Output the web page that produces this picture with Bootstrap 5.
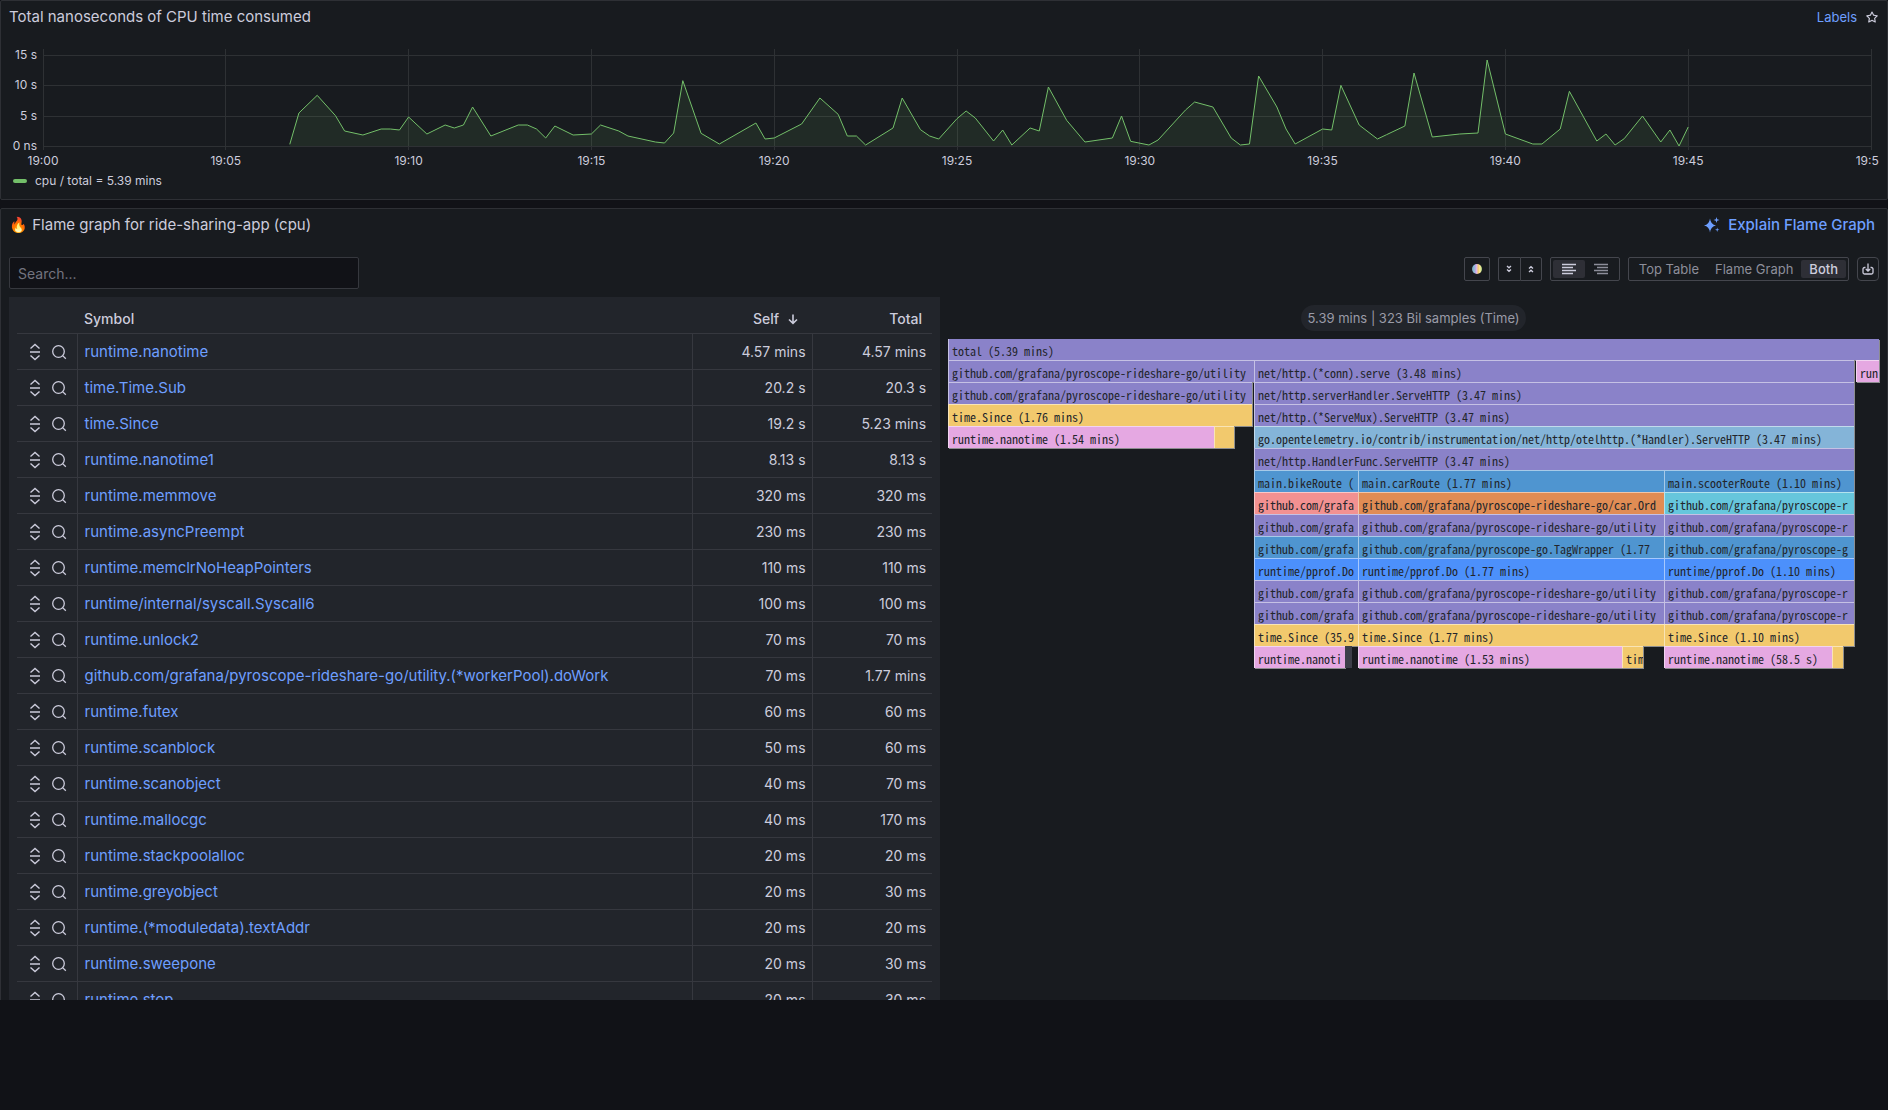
<!DOCTYPE html>
<html lang="en" data-bs-theme="dark">
<head>
<meta charset="utf-8">
<meta name="viewport" content="width=device-width, initial-scale=1">
<title>ride-sharing-app (cpu)</title>
<link href="https://cdn.jsdelivr.net/npm/bootstrap@5.3.0/dist/css/bootstrap.min.css" rel="stylesheet">
<style>
:root{--fg:#ccccdc;--fg-dim:#8d8e9a;--link:#6e9fff;--panel:#181b1f;--raised:#22252b;--line:#2e3035;--line-strong:#44464d}
body{background:#111217;color:var(--fg);font-family:Inter,"Liberation Sans",sans-serif;font-size:14px;line-height:22px}
.viewport-clip{height:calc(100vh - 110px);overflow:hidden}
.panel{background:var(--panel);border:1px solid var(--line);border-radius:2px}
.panel-head{padding:5px 8px 0}
.panel-title{font-size:15px;font-weight:400;line-height:22px;margin:0}
h2.panel-title{color:var(--fg)}
a{color:var(--link);text-decoration:none}
svg{display:block;flex:none}
.small-text{font-size:12px;line-height:16px}
.mid-text{font-size:13px;line-height:16px}
/* time series */
.chart-wrap{overflow:hidden;padding-right:8px;margin-top:19px}
.chart-body{padding-top:2px}
.y-axis{width:34px;padding-right:6px;margin:-2px 0 -4px}
.y-axis span{line-height:16px}
.plot{height:101px}
.x-axis{margin-left:34px;height:16px;margin-top:3px}
.x-axis span{width:0;display:flex;justify-content:center;white-space:nowrap}
.grid-line{stroke:#2e3134;stroke-width:1;vector-effect:non-scaling-stroke;shape-rendering:crispEdges;fill:none}
.series-line{stroke:#73bf69;stroke-width:1;fill:none;vector-effect:non-scaling-stroke}
.series-fill{fill:#73bf69;fill-opacity:.1}
.legend-line{padding:4px 0 10px 12px}
.swatch{width:14px;height:4px;border-radius:2px;background:#73bf69}
/* toolbar */
.tool-line{margin:21px 0 8px}
.search-box{width:350px;height:32px;background:#111217;border:1px solid #36383e;border-radius:2px;padding:0 8px;font-size:14px;color:var(--fg)}
.search-box::placeholder{color:#73747f;opacity:1}
.tool{height:24px;border:1px solid var(--line-strong);background:transparent;color:var(--fg);border-radius:2px;padding:0;display:flex;align-items:center;justify-content:center}
.tool-palette{width:26px}
.tool-half{width:22px}
.tool-half:first-child{border-radius:2px 0 0 2px;border-right:0}
.tool-half:last-child{border-radius:0 2px 2px 0}
.segmented{height:24px;border:1px solid var(--line-strong);border-radius:2px;padding:2px}
.segmented button{border:0;background:transparent;color:var(--fg-dim);font-size:13px;line-height:18px;padding:0 8px;border-radius:2px;height:18px}
.segmented button.active{background:#2e2f36;color:var(--fg);font-weight:500}
.dot-palette{width:10px;height:10px;border-radius:50%;background:linear-gradient(90deg,#7f9fc0 0,#8ac0d0 20%,#b7a9e8 35%,#e7b9e0 48%,#f2c96d 62%,#ffee9e 80%,#9fcf79 100%)}
/* symbol table */
.table-pane{width:50%;min-width:0;background:var(--raised);padding:0 8px}
.sym{width:100%;table-layout:fixed;border-collapse:collapse}
.sym tr{height:36px}
.sym th{font-weight:500;padding:0 10px 3px 7px;white-space:nowrap;vertical-align:bottom}
.sym th.sorted{padding-right:13px}
.sym td{padding:1px 6px 0 7px;white-space:nowrap;border-top:1px solid #36383f}
.sym td+td{border-left:1px solid #36383f}
.sym td a{font-size:15px}
.sym .c-act{width:60px}
.sym .c-num{width:120px}
.act-cell{padding-left:5px;gap:10px}
.icon-btn{background:none;border:0;padding:0;color:var(--fg);display:block}
/* flame graph */
.flame-pane{width:50%;min-width:0}
.pill{background:var(--raised);border-radius:13px;height:26px;line-height:26px;padding:0 6px;font-size:13px;color:#9a9ba7}
.frow{display:flex;height:22px}
.bar{height:22px;overflow:hidden;white-space:nowrap;color:#22252b;font:12px/22px "Noto Sans Mono CJK JP","Noto Sans Mono CJK SC",monospace;padding:1px 0 0 3px;border-top:1px solid rgba(255,255,255,.5);border-left:1px solid rgba(255,255,255,.5);box-shadow:1px 1px 0 rgba(255,255,255,.5);min-width:0;flex:none}
.frow:first-child .bar{border-top:0;height:21px}
.frow:first-child{height:21px}
.bar.blank{padding:0}
.bar.dim{border:0;box-shadow:none;padding:0}
</style>
</head>
<body>
<main class="viewport-clip">
<section class="panel">
  <header class="panel-head d-flex justify-content-between align-items-center">
    <h2 class="panel-title">Total nanoseconds of CPU time consumed</h2>
    <div class="d-flex align-items-center gap-2 mid-text">
      <a href="#">Labels</a>
      <button class="icon-btn" aria-label="Favorite"><svg width="14" height="14" viewBox="0 0 24 24" fill="currentColor"><path d="M22 9.67a1 1 0 0 0-.86-.67l-5.69-.83L12.9 3a1 1 0 0 0-1.8 0L8.55 8.16 2.86 9a1 1 0 0 0-.81.68 1 1 0 0 0 .25 1l4.13 4-1 5.68a1 1 0 0 0 1.45 1.07L12 18.76l5.1 2.68c.14.08.3.12.46.12a1 1 0 0 0 .99-1.19l-1-5.68 4.13-4A1 1 0 0 0 22 9.67Zm-6.15 4a1 1 0 0 0-.29.89l.72 4.19-3.76-2a1 1 0 0 0-.94 0l-3.76 2 .72-4.19a1 1 0 0 0-.29-.89l-3-3 4.21-.61a1 1 0 0 0 .76-.55L12 5.7l1.88 3.82a1 1 0 0 0 .76.55l4.21.61Z"/></svg></button>
    </div>
  </header>
  <div class="chart-wrap small-text mx-2">
    <div class="chart-body d-flex">
      <div class="y-axis d-flex flex-column justify-content-between text-end">
        <span>15 s</span><span>10 s</span><span>5 s</span><span>0 ns</span>
      </div>
      <svg class="plot flex-fill" viewBox="0 148 200 303" preserveAspectRatio="none" overflow="visible" role="img" aria-label="CPU time">
        <path class="grid-line" d="M0 166H200M0 257H200M0 349H200M0 439H200M0 148V451M20 148V451M40 148V451M60 148V451M80 148V451M100 148V451M120 148V451M140 148V451M160 148V451M180 148V451M200 148V451"/>
        <path class="series-fill" id="fill"/><path class="series-line" id="line"/>
      </svg>
    </div>
    <div class="x-axis d-flex justify-content-between">
      <span>19:00</span><span>19:05</span><span>19:10</span><span>19:15</span><span>19:20</span><span>19:25</span><span>19:30</span><span>19:35</span><span>19:40</span><span>19:45</span><span>19:50</span>
    </div>
  </div>
  <div class="legend-line d-flex align-items-center gap-2 small-text"><span class="swatch"></span><span>cpu / total = 5.39 mins</span></div>
</section>

<section class="panel mt-2">
  <header class="panel-head d-flex justify-content-between align-items-center">
    <h2 class="panel-title">🔥 Flame graph for ride-sharing-app (cpu)</h2>
    <a href="#" class="panel-title d-flex align-items-center gap-2 fw-medium pe-1">
      <svg width="16" height="16" viewBox="0 0 16 16" fill="currentColor"><path d="M6 1.500Q6.800 7.700 12 8.500Q6.800 9.300 6 15.500Q5.200 9.300 0 8.500Q5.200 7.700 6 1.500ZM12.500 0 13.200 2.300 15.500 3 13.200 3.700 12.500 6 11.800 3.700 9.500 3 11.800 2.300ZM13.200 10.500 13.700 12.200 15.500 12.700 13.700 13.200 13.200 15 12.700 13.200 11 12.700 12.700 12.200Z"/><path d="M6 4 7.500 7 10 8.500 7.500 10 6 13 4.500 10 2 8.500 4.500 7Z"/></svg>Explain Flame Graph</a>
  </header>
  <div class="tool-line d-flex justify-content-between align-items-start px-2">
    <input class="search-box" type="text" placeholder="Search..." aria-label="Search">
    <div class="d-flex gap-2">
      <button class="tool tool-palette" aria-label="Change color scheme"><span class="dot-palette"></span></button>
      <div class="d-flex">
        <button class="tool tool-half" aria-label="Expand all groups"><svg width="10" height="10" viewBox="0 0 10 10" fill="none" stroke="currentColor" stroke-width="1.300"><path d="M3 2 5 3.800 7 2M3 5.500 5 7.300 7 5.500"/></svg></button>
        <button class="tool tool-half" aria-label="Collapse all groups"><svg width="10" height="10" viewBox="0 0 10 10" fill="none" stroke="currentColor" stroke-width="1.300"><path d="M3 4.500 5 2.700 7 4.500M3 8 5 6.200 7 8"/></svg></button>
      </div>
      <div class="segmented d-flex">
        <button class="active" aria-label="Align left"><svg width="16" height="12" viewBox="0 0 16 12" stroke="currentColor" stroke-width="1.600"><path d="M1 1.500H15M1 4.500H12M1 7.500H15M1 10.500H12"/></svg></button>
        <button aria-label="Align right"><svg width="16" height="12" viewBox="0 0 16 12" stroke="currentColor" stroke-width="1.600"><path d="M1 1.500H15M4 4.500H15M1 7.500H15M4 10.500H15"/></svg></button>
      </div>
      <div class="segmented d-flex">
        <button>Top Table</button><button>Flame Graph</button><button class="active">Both</button>
      </div>
      <button class="tool tool-half rounded-1" aria-label="Export data"><svg width="12" height="12" viewBox="0 0 12 12" fill="none" stroke="currentColor" stroke-width="1.300"><path d="M3.500 4.500H2.500A1.500 1.500 0 0 0 1 6V9.500A1.500 1.500 0 0 0 2.500 11H9.500A1.500 1.500 0 0 0 11 9.500V6A1.500 1.500 0 0 0 9.500 4.500H8.500M6 .500V8M3.800 6 6 8.200 8.200 6"/></svg></button>
    </div>
  </div>
  <div class="d-flex gap-2 px-2">
    <div class="table-pane">
      <table class="sym">
        <colgroup><col class="c-act"><col><col class="c-num"><col class="c-num"></colgroup>
        <thead><tr><th></th><th>Symbol</th><th class="sorted"><div class="d-flex justify-content-end align-items-center gap-2">Self<svg width="12" height="12" viewBox="0 0 12 12" fill="none" stroke="currentColor" stroke-width="1.600"><path d="M6 1.500V10M2 6.500 6 10.300 10 6.500"/></svg></div></th><th class="text-end">Total</th></tr></thead>
        <tbody id="rows"></tbody>
      </table>
    </div>
    <div class="flame-pane">
      <div class="d-flex justify-content-center pt-2 pb-2"><span class="pill">5.39 mins | 323 Bil samples (Time)</span></div>
      <div id="flame"></div>
    </div>
  </div>
</section>
</main>
<script>
// CPU series: [15 s step since 19:00, height on the plot's scale]
const pts="27,434 28,340 30,287 32,348 33,394 35,406 37,388 38,388 39,391 40,352 42,403 44,376 45,385 46,376 47,322 49,409 52,376 53,376 54,388 55,415 56,379 58,406 60,403 61,376 63,394 64,409 67,427 68,430 69,400 70,243 72,401 74,433 78,370 79,418 80,415 83,373 85,295 87,344 88,409 89,409 90,436 93,385 94,295 96,390 97,409 98,418 100,357 101,334 102,355 104,424 105,391 106,436 108,385 109,394 110,262 112,362 114,427 117,415 118,349 119,425 121,436 122,421 125,331 126,307 128,322 130,415 131,436 132,433 133,229 135,322 136,388 137,433 140,388 141,391 142,257 144,376 146,418 147,405 149,379 150,220 152,412 155,403 157,400 158,181 160,403 163,433 164,433 166,388 167,275 170,424 171,403 172,436 173,417 175,349 177,427 178,391 179,439 180,382";
document.getElementById('line').setAttribute('d','M'+pts.replace(/ /g,'L'));
document.getElementById('fill').setAttribute('d','M27,439L'+pts.replace(/ /g,'L')+'L180,439Z');

const symbols=[["runtime.nanotime","4.57 mins","4.57 mins"],["time.Time.Sub","20.2 s","20.3 s"],["time.Since","19.2 s","5.23 mins"],["runtime.nanotime1","8.13 s","8.13 s"],["runtime.memmove","320 ms","320 ms"],["runtime.asyncPreempt","230 ms","230 ms"],["runtime.memclrNoHeapPointers","110 ms","110 ms"],["runtime/internal/syscall.Syscall6","100 ms","100 ms"],["runtime.unlock2","70 ms","70 ms"],["github.com/grafana/pyroscope-rideshare-go/utility.(*workerPool).doWork","70 ms","1.77 mins"],["runtime.futex","60 ms","60 ms"],["runtime.scanblock","50 ms","60 ms"],["runtime.scanobject","40 ms","70 ms"],["runtime.mallocgc","40 ms","170 ms"],["runtime.stackpoolalloc","20 ms","20 ms"],["runtime.greyobject","20 ms","30 ms"],["runtime.(*moduledata).textAddr","20 ms","20 ms"],["runtime.sweepone","20 ms","30 ms"],["runtime.stop","20 ms","30 ms"]];
const sandwich='<svg width="12" height="18" viewBox="0 0 12 18" fill="none" stroke="currentColor" stroke-width="1.400"><path d="M1.500 5.500 6 1.500 10.500 5.500M1 9H11M1.500 12.500 6 16.500 10.500 12.500"/></svg>';
const lens='<svg width="16" height="16" viewBox="0 0 16 16" fill="none" stroke="currentColor" stroke-width="1.300"><circle cx="7.500" cy="7.500" r="5.800"/><path d="M11.600 11.600 14.800 14.800"/></svg>';
document.getElementById('rows').innerHTML=symbols.map(([n,s,t])=>`<tr><td><div class="act-cell d-flex align-items-center"><button class="icon-btn" aria-label="Show in sandwich view">${sandwich}</button><button class="icon-btn" aria-label="Search for symbol">${lens}</button></div></td><td><a href="#">${n}</a></td><td class="text-end">${s}</td><td class="text-end">${t}</td></tr>`).join('');

// Flame graph: each bar is [start, end, colour, label] on a scale of 931 units
const P='#8a82c9',Y='#f2c96d',K='#e5a8e2',B='#4f95d0',V='#4c90fb',G='github.com/grafana/pyroscope-',S='github.com/grafa',U=G+'rideshare-go/utility';
const three=(c,a,b,d)=>[[306,410,c[0],a],[410,716,c[1],b],[716,906,c[2],d]];
const rows=[
[[0,931,P,'total (5.39 mins)']],
[[0,306,P,U],[306,906,P,'net/http.(*conn).serve (3.48 mins)'],[908,931,K,'run']],
[[0,304,P,U],[306,906,P,'net/http.serverHandler.ServeHTTP (3.47 mins)']],
[[0,304,Y,'time.Since (1.76 mins)'],[306,906,P,'net/http.(*ServeMux).ServeHTTP (3.47 mins)']],
[[0,266,K,'runtime.nanotime (1.54 mins)'],[266,286,Y,''],[306,906,'#84b4d8','go.opentelemetry.io/contrib/instrumentation/net/http/otelhttp.(*Handler).ServeHTTP (3.47 mins)']],
[[306,906,P,'net/http.HandlerFunc.ServeHTTP (3.47 mins)']],
three([B,B,B],'main.bikeRoute (','main.carRoute (1.77 mins)','main.scooterRoute (1.10 mins)'),
three(['#f29191','#e08c54','#66c6dc'],S,G+'rideshare-go/car.Ord',G+'r'),
three([P,P,P],S,U,G+'r'),
three([B,B,B],S,G+'go.TagWrapper (1.77',G+'g'),
three([V,V,V],'runtime/pprof.Do','runtime/pprof.Do (1.77 mins)','runtime/pprof.Do (1.10 mins)'),
three([P,P,P],S,U,G+'r'),
three([P,P,P],S,U,G+'r'),
three([Y,Y,Y],'time.Since (35.9','time.Since (1.77 mins)','time.Since (1.10 mins)'),
[[306,397,K,'runtime.nanoti'],[397,404,'#3d3f49',''],[410,674,K,'runtime.nanotime (1.53 mins)'],[674,695,Y,'tim'],[716,884,K,'runtime.nanotime (58.5 s)'],[884,895,Y,'']]
];
document.getElementById('flame').innerHTML=rows.map(r=>{let at=0;return '<div class="frow">'+r.map(([a,b,c,t])=>{const m=(a-at)/9.31,w=(b-a)/9.31;at=b;return `<div class="bar ${t?'':'blank'} ${c=='#3d3f49'?'dim':''}" style="margin-left:${m}%;width:${w}%;background-color:${c}">${t}</div>`}).join('')+'</div>'}).join('');
</script>
<script src="https://cdn.jsdelivr.net/npm/bootstrap@5.3.0/dist/js/bootstrap.bundle.min.js"></script>
</body>
</html>
